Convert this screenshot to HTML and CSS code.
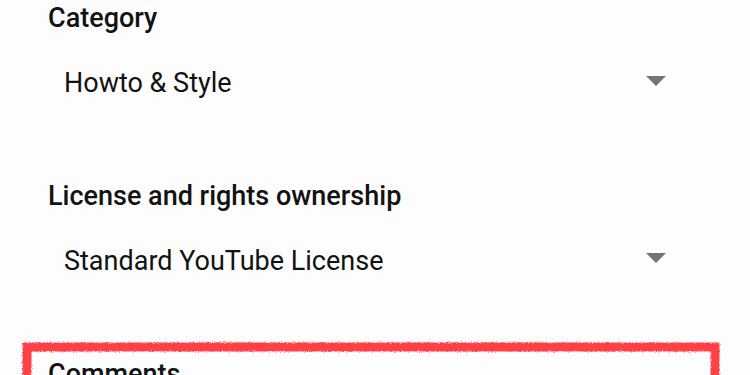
FILE: index.html
```html
<!DOCTYPE html>
<html>
<head>
<meta charset="utf-8">
<link rel="stylesheet" href="styles.css">
</head>
<body>
<div class="page">
  <section class="field">
    <div class="label">Category</div>
    <div class="select">
      <span class="value">Howto &amp; Style</span>
      <span class="arrow"></span>
    </div>
  </section>
  <section class="field">
    <div class="label">License and rights ownership</div>
    <div class="select">
      <span class="value">Standard YouTube License</span>
      <span class="arrow arrow-low"></span>
    </div>
  </section>
  <section class="field highlighted">
    <div class="label">Comments</div>
    <svg class="marker" viewBox="0 0 710 60" preserveAspectRatio="none">
      <defs>
        <filter id="rough" x="-5%" y="-50%" width="110%" height="200%">
          <feTurbulence type="fractalNoise" baseFrequency="0.9" numOctaves="2" result="n"/>
          <feDisplacementMap in="SourceGraphic" in2="n" scale="3"/>
        </filter>
      </defs>
      <path d="M 9 60 L 9 9 L 697 9 L 697 60" fill="none" stroke="#ff1e23" stroke-opacity="0.85" stroke-width="9" filter="url(#rough)"/>
    </svg>
  </section>
</div>
</body>
</html>
```
FILE: styles.css
```css
html, body {
  margin: 0;
  padding: 0;
  background: #fdfdfd;
}
.page {
  width: 750px;
  height: 375px;
  overflow: hidden;
  font-family: Roboto, "Liberation Sans", sans-serif;
  color: #121212;
  padding: 2px 0 0 48px;
  box-sizing: border-box;
}
.field {
  display: flex;
  flex-direction: column;
  margin-bottom: 65px;
}
.label {
  font-size: 27px;
  font-weight: 500;
  line-height: 32px;
  height: 32px;
  white-space: nowrap;
}
.select {
  display: flex;
  align-items: center;
  justify-content: space-between;
  width: 618px;
  height: 64px;
  padding-left: 16px;
  box-sizing: border-box;
  margin-top: 17px;
}
.value {
  font-size: 27px;
  line-height: 32px;
  white-space: nowrap;
}
.arrow {
  width: 0;
  height: 0;
  border-left: 10px solid transparent;
  border-right: 10px solid transparent;
  border-top: 10px solid #757575;
  margin-bottom: 4px;
}
.arrow-low {
  margin-bottom: 6px;
}
.highlighted {
  position: relative;
}
.marker {
  position: absolute;
  left: -30px;
  top: -20px;
  width: 710px;
  height: 60px;
  overflow: visible;
}
```
